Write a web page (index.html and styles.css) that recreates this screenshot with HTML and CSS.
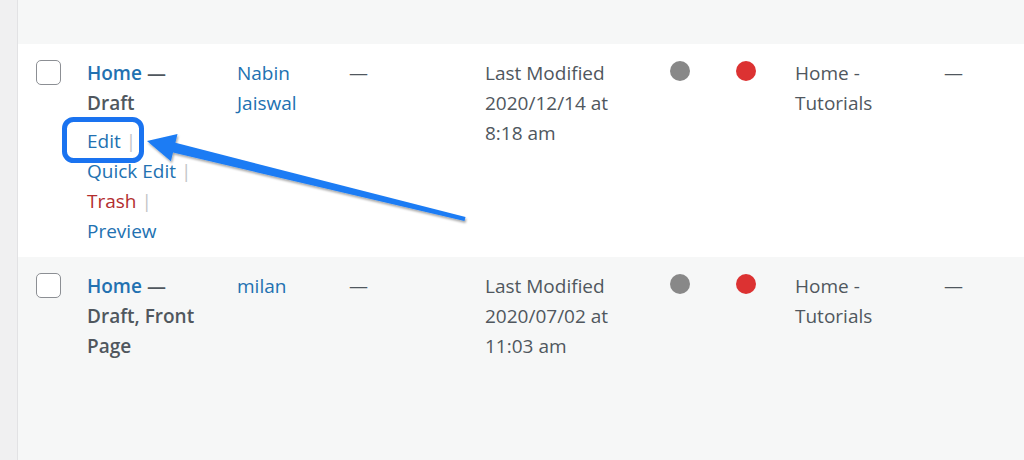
FILE: index.html
```html
<!DOCTYPE html>
<html lang="en">
<head>
<meta charset="utf-8">
<title>Pages</title>
<link rel="stylesheet" href="styles.css">
</head>
<body>
<div class="page">
  <div class="edge"></div>
  <div class="content">
    <div class="row row-alt row-top"></div>

    <div class="row row-white">
      <div class="cell cell-check"><span class="checkbox"></span></div>
      <div class="cell cell-title">
        <strong class="title"><a class="title-link">Home</a> — <span class="state">Draft</span></strong>
        <div class="actions">
          <span class="action"><a class="link">Edit</a><span class="sep">|</span></span>
          <span class="action"><a class="link">Quick Edit</a><span class="sep">|</span></span>
          <span class="action"><a class="link trash">Trash</a><span class="sep">|</span></span>
          <span class="action"><a class="link">Preview</a></span>
        </div>
      </div>
      <div class="cell cell-author"><a class="link">Nabin Jaiswal</a></div>
      <div class="cell cell-tags">—</div>
      <div class="cell cell-date">Last Modified 2020/12/14 at 8:18 am</div>
      <div class="cell cell-dot"><span class="dot dot-grey"></span></div>
      <div class="cell cell-dot"><span class="dot dot-red"></span></div>
      <div class="cell cell-cat">Home - Tutorials</div>
      <div class="cell cell-last">—</div>
    </div>

    <div class="row row-alt row-fill">
      <div class="cell cell-check"><span class="checkbox"></span></div>
      <div class="cell cell-title">
        <strong class="title"><a class="title-link">Home</a> — <span class="state">Draft, Front Page</span></strong>
      </div>
      <div class="cell cell-author"><a class="link">milan</a></div>
      <div class="cell cell-tags">—</div>
      <div class="cell cell-date">Last Modified 2020/07/02 at 11:03 am</div>
      <div class="cell cell-dot"><span class="dot dot-grey"></span></div>
      <div class="cell cell-dot"><span class="dot dot-red"></span></div>
      <div class="cell cell-cat">Home - Tutorials</div>
      <div class="cell cell-last">—</div>
    </div>

    <svg class="annotation" width="1006" height="460" viewBox="18 0 1006 460" xmlns="http://www.w3.org/2000/svg">
      <defs>
        <filter id="shadow" x="-10%" y="-30%" width="120%" height="160%">
          <feDropShadow dx="1" dy="2" stdDeviation="1" flood-color="#000" flood-opacity="0.35"/>
        </filter>
      </defs>
      <rect x="64.5" y="119.5" width="77" height="41" rx="9" ry="9" fill="none" stroke="#1a73f0" stroke-width="5"/>
      <polygon filter="url(#shadow)" fill="#1b7cf4"
        points="147,141 177.5,134.1 175.4,142.8 465.5,217.1 464.5,220.9 173,152.6 170.9,161.3"/>
    </svg>
  </div>
</div>
</body>
</html>
```
FILE: styles.css
```css
html, body {
  margin: 0;
  padding: 0;
}
body {
  background: #f0f0f1;
  font-family: "Open Sans", "Noto Sans", sans-serif;
  font-size: 19px;
  line-height: 30px;
  color: #50575e;
  width: 1024px;
  height: 460px;
  overflow: hidden;
}
.page {
  display: flex;
  height: 460px;
}
.edge {
  width: 17px;
  flex: none;
  background: #f0f0f1;
  border-right: 1px solid #e2e2e4;
}
.content {
  position: relative;
  flex: 1;
  display: flex;
  flex-direction: column;
  overflow: hidden;
}
.row {
  display: grid;
  grid-template-columns: 51px 150px 112px 136px 185px 66px 59px 149px 1fr;
  padding: 14px 0 11px 18px;
}
.row-top {
  height: 44px;
  padding: 0;
  box-sizing: border-box;
}
.row-alt {
  background: #f6f7f7;
}
.row-white {
  background: #fff;
}
.row-fill {
  flex: 1;
}
.cell-check {
  padding-top: 2px;
}
.checkbox {
  display: block;
  width: 23px;
  height: 23px;
  border: 1px solid #8c8f94;
  border-radius: 5px;
  background: #fff;
}
.title {
  display: block;
  max-width: 128px;
  font-weight: 600;
  color: #50575e;
}
.title-link {
  color: #2271b1;
}
.actions {
  margin-top: 8px;
  display: flex;
  flex-direction: column;
}
.action {
  display: block;
  height: 30px;
  line-height: 30px;
}
.link {
  color: #2271b1;
  text-decoration: none;
}
.trash {
  color: #b32d2e;
}
.sep {
  color: #c3c4c7;
  margin-left: 5px;
  line-height: 1;
}
.cell-author {
  max-width: 95px;
}
.cell-date {
  max-width: 140px;
}
.cell-dot {
  padding-top: 3px;
}
.dot {
  display: block;
  width: 20px;
  height: 20px;
  border-radius: 50%;
}
.dot-grey {
  background: #888888;
}
.dot-red {
  background: #dc3232;
}
.cell-cat {
  max-width: 100px;
}
.annotation {
  position: absolute;
  left: 0;
  top: 0;
  pointer-events: none;
}
```
